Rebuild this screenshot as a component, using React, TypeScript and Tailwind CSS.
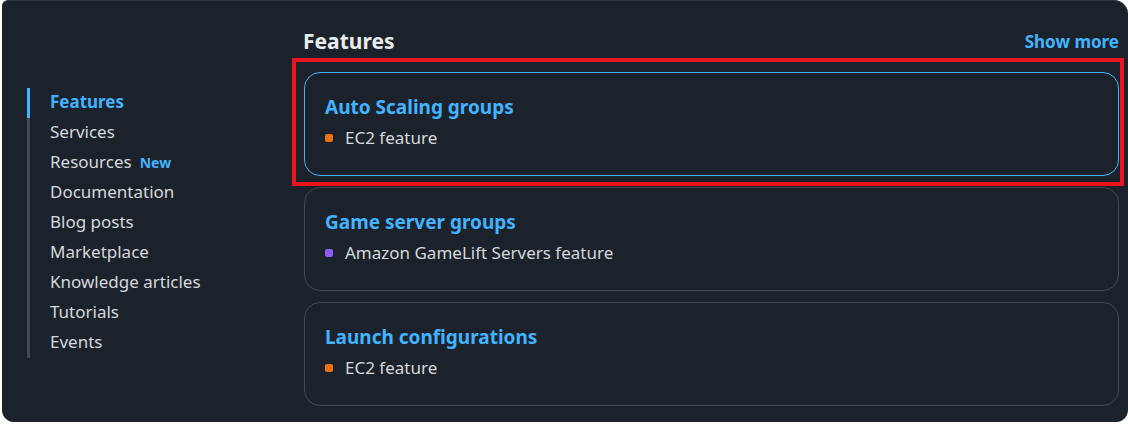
const navItems = [
  "Features",
  "Services",
  "Resources",
  "Documentation",
  "Blog posts",
  "Marketplace",
  "Knowledge articles",
  "Tutorials",
  "Events",
];

const cards = [
  { title: "Auto Scaling groups", tag: "EC2 feature", color: "bg-[#ec7211]", active: true },
  { title: "Game server groups", tag: "Amazon GameLift Servers feature", color: "bg-[#8c5cf6]", active: false },
  { title: "Launch configurations", tag: "EC2 feature", color: "bg-[#ec7211]", active: false },
];

function Card({ title, tag, color, active }: { title: string; tag: string; color: string; active: boolean }) {
  return (
    <div
      className={`h-[104px] rounded-[16px] border px-[20px] pt-[21px] ${
        active ? "border-[#42b4ff]" : "border-[#424852]"
      }`}
    >
      <div className="text-[19px] font-bold leading-[26px] text-[#42b4ff]">{title}</div>
      <div className="mt-[7px] flex items-center gap-[12px] text-[17px] leading-[22px] text-[#d5d8dc]">
        <span className={`h-[8px] w-[8px] rounded-[2px] ${color}`} />
        {tag}
      </div>
    </div>
  );
}

export default function App() {
  return (
    <div className="h-[424px] w-[1128px] overflow-hidden bg-white" style={{ fontFamily: '"Noto Sans", sans-serif' }}>
      <div className="ml-[2px] flex h-[422px] rounded-b-[12px] rounded-tr-[14px] rounded-tl-[6px] border-t border-[#2c333d] bg-[#1c222b]">
        <nav className="w-[301px] shrink-0 pl-[25px] pt-[87px]">
          <ul className="border-l-[3px] border-[#434851]">
            {navItems.map((item, i) => (
              <li
                key={item}
                className={`-ml-[3px] flex h-[30px] items-center border-l-[3px] pb-[2px] pl-[20px] text-[17px] ${
                  i === 0 ? "border-[#42b4ff] font-bold text-[#42b4ff]" : "border-transparent text-[#d5d8dc]"
                }`}
              >
                {item}
                {item === "Resources" && (
                  <span className="ml-[8px] text-[14px] font-bold text-[#42b4ff]">New</span>
                )}
              </li>
            ))}
          </ul>
        </nav>
        <main className="flex-1 pr-[9px] pt-[27px]">
          <div className="flex h-[28px] items-center justify-between">
            <h2 className="text-[21px] font-bold text-[#e9ebed]">Features</h2>
            <a className="text-[17px] font-bold text-[#42b4ff]">Show more</a>
          </div>
          <div className="mt-[16px] flex flex-col gap-[11px] pl-[1px]">
            {cards.map((c) => (
              <div key={c.title} className="relative">
                <Card {...c} />
                {c.active && (
                  <div className="pointer-events-none absolute -bottom-[10px] -left-[12px] -right-[5px] -top-[14px] border-[4px] border-[#e8141e]" />
                )}
              </div>
            ))}
          </div>
        </main>
      </div>
    </div>
  );
}
